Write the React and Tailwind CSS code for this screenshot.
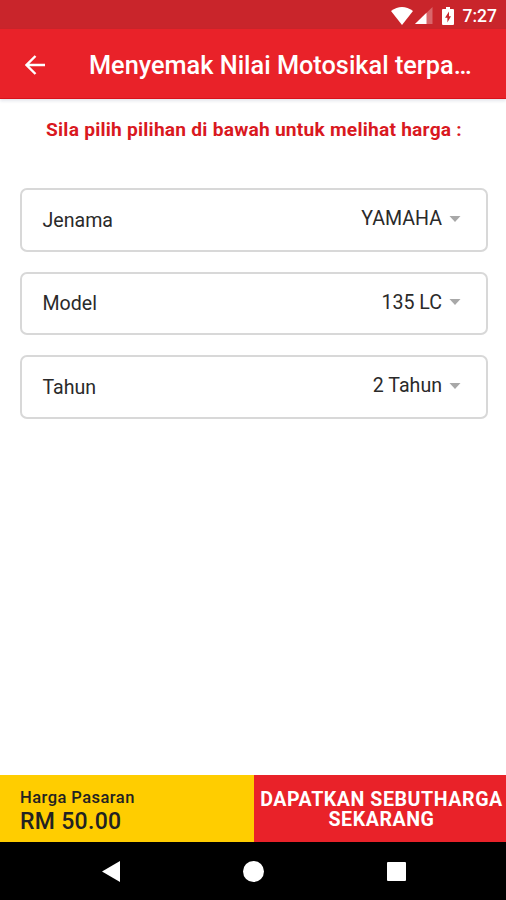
const fields = [
  { label: "Jenama", value: "YAMAHA" },
  { label: "Model", value: "135 LC" },
  { label: "Tahun", value: "2 Tahun" },
];

const StatusBar = () => (
  <div className="flex h-[29px] items-center justify-end bg-[#c9252b] pr-[9px] text-white">
    <svg className="mt-0.5 h-[18px] w-[22px]" viewBox="0 0 22 18" fill="currentColor">
      <path d="M11 18 0 4Q11-4 22 4Z" />
    </svg>
    <svg className="mt-0.5 ml-0.5 h-[17px] w-[18px]" viewBox="0 0 18 17" fill="currentColor">
      <path d="M0 17 17.5 0V17Z" opacity=".3" />
      <path d="M0 17 11.5 5.8V17Z" />
    </svg>
    <svg className="mt-0.5 ml-[9px] h-[18px] w-3" viewBox="0 0 12 18">
      <path d="M4 0h4v2h3q1 0 1 1v14q0 1-1 1H1q-1 0-1-1V3q0-1 1-1h3Z" fill="#fff" />
      <path d="M7 4.5 3 10.8h2.4V15.5L9 9.2H7Z" fill="#c9252b" />
    </svg>
    <span className="mt-0.5 ml-[9px] text-[17.5px] leading-5 font-medium">7:27</span>
  </div>
);

const Header = () => (
  <header className="flex h-[70px] items-center border-b border-[#d8121b] bg-[#e92229] pl-[25px] text-white shadow-[0_2px_3px_rgba(60,80,120,0.14)]">
    <svg className="mt-0.5 h-5 w-5" viewBox="0 0 20 20" fill="none" stroke="currentColor" strokeWidth="2.4">
      <path d="M20 10H2M10.5 1 1.5 10l9 9" />
    </svg>
    <h1 className="mt-1 ml-11 text-[25.3px] leading-7 font-medium whitespace-nowrap">
      Menyemak Nilai Motosikal terpa…
    </h1>
  </header>
);

const SelectField = ({ label, value }) => (
  <button
    type="button"
    className="flex h-[63.5px] w-full items-center justify-between rounded-[7px] border-2 border-[#d8d8d8] pr-[25px] pl-[20.5px] text-[19.6px] leading-6 text-[#2a2a2a]"
  >
    <span className="mt-0.5">{label}</span>
    <span className="-mt-px flex items-center">
      {value}
      <svg className="mb-px ml-[7px] h-1.5 w-3" viewBox="0 0 12 6" fill="#a8a8a8">
        <path d="M.5 0h11L6 6Z" />
      </svg>
    </span>
  </button>
);

const BottomBar = () => (
  <div className="flex h-[67px]">
    <div className="w-[254px] bg-[#ffcd00] pt-3 pl-5 font-medium text-[#222]">
      <p className="text-[16.5px] leading-[21px] tracking-[0.45px]">Harga Pasaran</p>
      <p className="text-[23px] leading-[27px] tracking-[0.3px]">RM 50.00</p>
    </div>
    <button
      type="button"
      className="flex flex-1 flex-col items-center justify-center gap-px bg-[#e92229] pt-px pl-[3px] text-[19.6px] leading-[19px] font-bold tracking-[0.55px] whitespace-nowrap text-white"
    >
      <span>DAPATKAN SEBUTHARGA</span>
      <span>SEKARANG</span>
    </button>
  </div>
);

const NavBar = () => (
  <nav className="flex h-[58px] bg-black pt-[19px] text-white">
    <svg className="ml-[102px] h-[21px] w-[18px]" viewBox="0 0 18 21" fill="currentColor">
      <path d="M18 0v21L0 10.5Z" />
    </svg>
    <span className="ml-[123px] h-[21px] w-[21px] rounded-full bg-white" />
    <span className="mt-px ml-[123px] h-[19px] w-[19px] rounded-[1px] bg-white" />
  </nav>
);

const App = () => (
  <div className="flex h-[900px] w-[506px] flex-col overflow-hidden bg-white font-['Roboto',sans-serif]">
    <StatusBar />
    <Header />
    <main className="flex-1 pt-[19px] pr-[18px] pl-5">
      <p className="text-center text-[19.2px] leading-6 font-bold tracking-[0.22px] whitespace-nowrap text-[#d9191f]">
        Sila pilih pilihan di bawah untuk melihat harga :
      </p>
      <div className="mt-[46px] flex flex-col gap-5">
        {fields.map((field) => (
          <SelectField key={field.label} {...field} />
        ))}
      </div>
    </main>
    <BottomBar />
    <NavBar />
  </div>
);

export default App;
